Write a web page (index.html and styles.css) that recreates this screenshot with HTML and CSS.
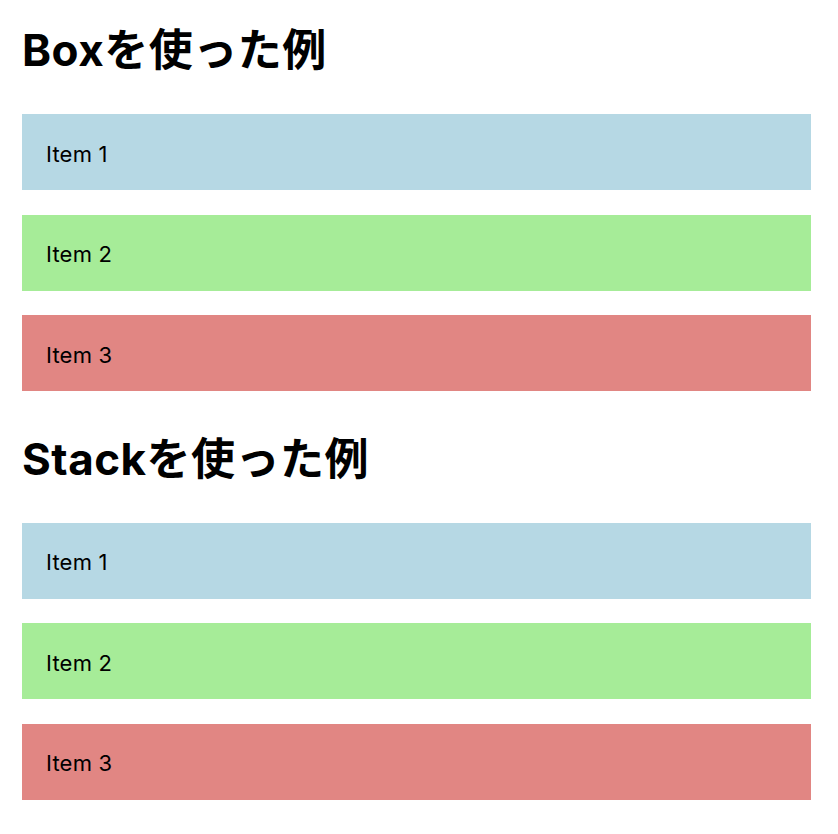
FILE: index.html
```html
<!DOCTYPE html>
<html lang="ja">
<head>
<meta charset="utf-8">
<link rel="stylesheet" href="styles.css">
</head>
<body>
<main class="page">
  <section class="section">
    <h2 class="title">Boxを使った例</h2>
    <div class="list">
      <div class="item item-blue">Item 1</div>
      <div class="item item-green">Item 2</div>
      <div class="item item-red">Item 3</div>
    </div>
  </section>
  <section class="section">
    <h2 class="title">Stackを使った例</h2>
    <div class="list">
      <div class="item item-blue">Item 1</div>
      <div class="item item-green">Item 2</div>
      <div class="item item-red">Item 3</div>
    </div>
  </section>
</main>
</body>
</html>
```
FILE: styles.css
```css
html, body {
  margin: 0;
  padding: 0;
  background: #ffffff;
}
body {
  font-family: Inter, "Noto Sans CJK JP", sans-serif;
  color: #000;
}
.page {
  display: flex;
  flex-direction: column;
  gap: 41.5px;
  padding: 24px 27px 0 22px;
}
.section {
  display: flex;
  flex-direction: column;
}
.title {
  margin: 0 0 38px 0;
  font-size: 44px;
  line-height: 52px;
  font-weight: 700;
  letter-spacing: 0.5px;
}
.list {
  display: flex;
  flex-direction: column;
  gap: 24.5px;
}
.item {
  height: 76px;
  box-sizing: border-box;
  padding: 3px 24px 0;
  display: flex;
  align-items: center;
  font-size: 22px;
  line-height: 32px;
  letter-spacing: 0.2px;
}
.item-blue { background: #b6d8e4; }
.item-green { background: #a6ec98; }
.item-red { background: #e18683; }
```
